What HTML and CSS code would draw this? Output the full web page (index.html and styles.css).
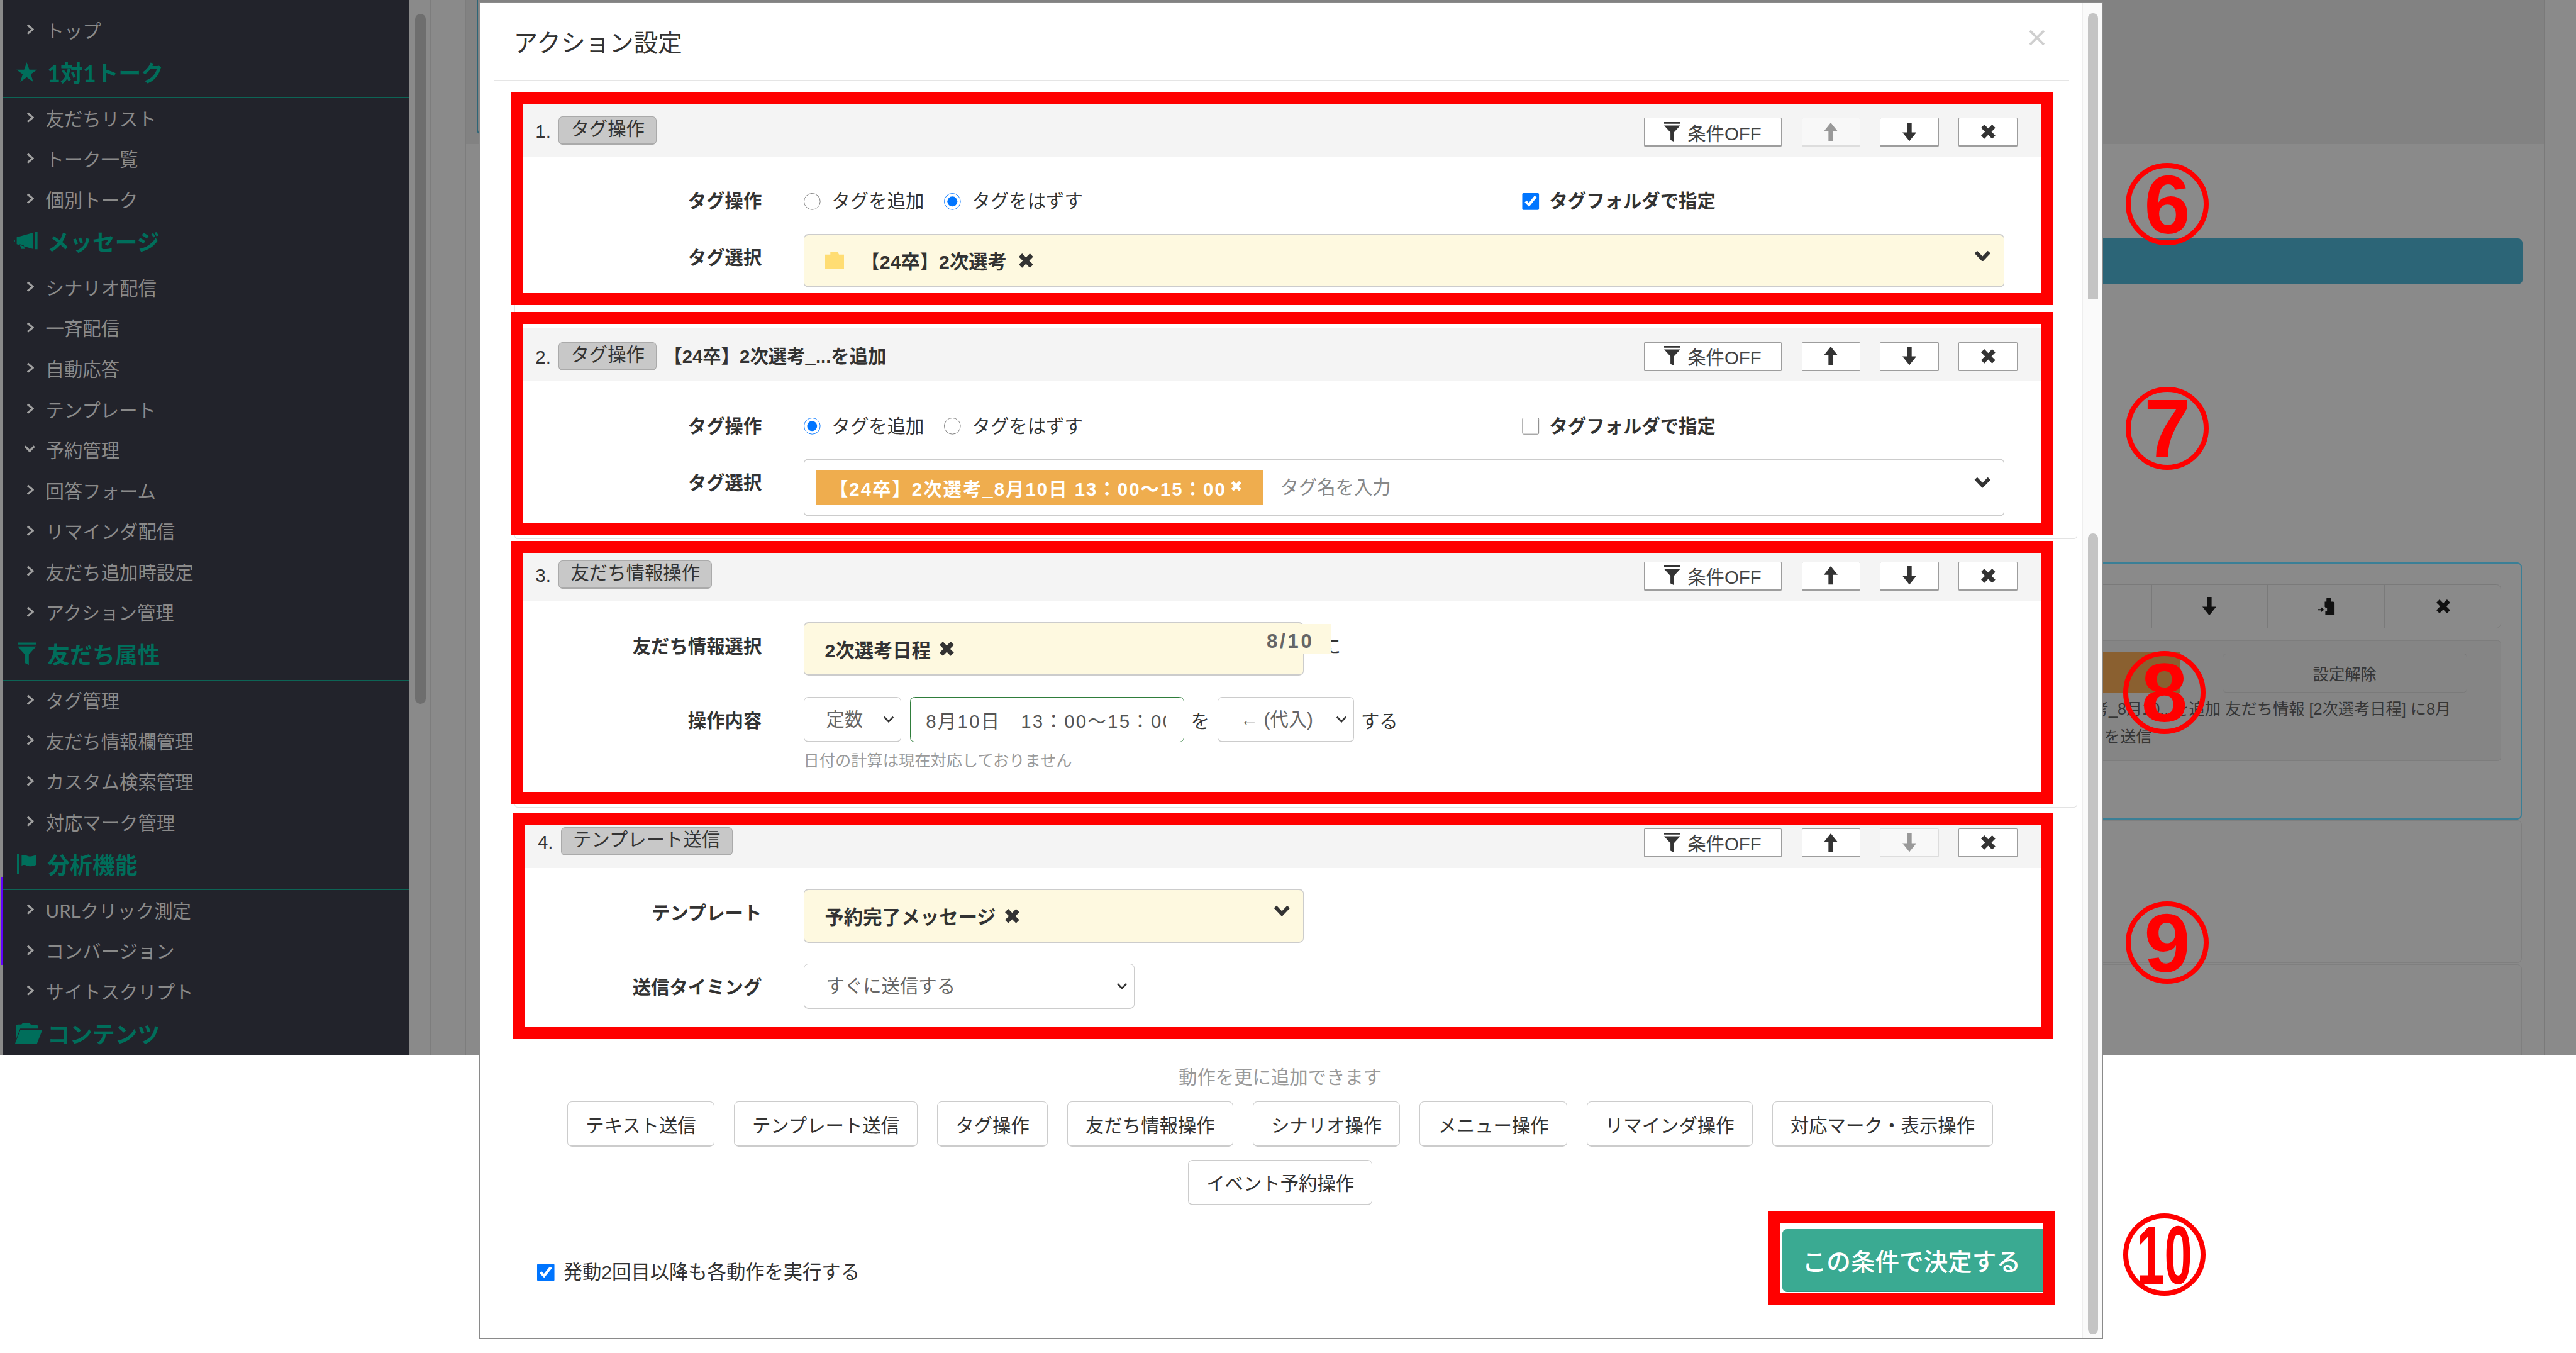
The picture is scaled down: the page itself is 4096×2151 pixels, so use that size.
FILE: index.html
```html
<!DOCTYPE html>
<html lang="ja">
  <head>
    <meta charset="UTF-8" />
    <meta name="viewport" content="width=device-width, initial-scale=1.0" />
    <title>アクション設定</title>
    <link rel="stylesheet" href="styles.css">
  </head>
  <body>
    <svg class="sprite" xmlns="http://www.w3.org/2000/svg">
      <symbol id="i-right" viewBox="0 0 13 19"><path d="M2 2l9 7.500-9 7.500" fill="none" stroke="currentColor" stroke-width="3.500"/></symbol>
      <symbol id="i-open" viewBox="0 0 20 15"><path d="M2 2.500l8 8.500 8-8.500" fill="none" stroke="currentColor" stroke-width="3.500"/></symbol>
      <symbol id="i-star" viewBox="0 0 36 34"><path d="M18 0l4.500 12.800H36l-11 8 4.200 13.200L18 26l-11.200 8L11 20.800l-11-8h13.500z" fill="currentColor"/></symbol>
      <symbol id="i-horn" viewBox="0 0 44 30"><path d="M0 13h2v4H0zM5 9L33 1v28L5 21zM10 21l3 8h6l-2-6zM37 0h4v30h-4z" fill="currentColor"/></symbol>
      <symbol id="i-flag" viewBox="0 0 34 36"><path d="M0 0h4v36H0zM8 3c6-3 10 3 16 2 4-1 8-2 10-3v17c-3 2-7 3-10 3-6 1-10-5-16-1z" fill="currentColor"/></symbol>
      <symbol id="i-folder-open" viewBox="0 0 48 36"><path d="M3 6c0-2 1-3 3-3h6l3-3h11l3 4h9c2 0 3 1 3 3v3H10L3 28zM10 13h38L39 36H1z" fill="currentColor"/></symbol>
      <symbol id="i-filter" viewBox="0 0 28 34"><path d="M0 0h28v3H0zM0 6h28L17 18v16l-6-3V18z" fill="currentColor"/></symbol>
      <symbol id="i-up" viewBox="0 0 24 32"><path d="M8 32V15H0L12 0l12 15h-8v17z" fill="currentColor"/></symbol>
      <symbol id="i-down" viewBox="0 0 24 32"><path d="M8 0v17H0l12 15 12-15h-8V0z" fill="currentColor"/></symbol>
      <symbol id="i-x" viewBox="0 0 24 24"><path d="M1 6l5-5 6 6 6-6 5 5-6 6 6 6-5 5-6-6-6 6-5-5 6-6z" fill="currentColor"/></symbol>
      <symbol id="i-chev" viewBox="0 0 29 19"><path d="M3 3l11.500 12L26 3" fill="none" stroke="currentColor" stroke-width="6.500"/></symbol>
      <symbol id="i-folder" viewBox="0 0 33 30"><path d="M9 0h13l2 4h9v26H0V4h9z" fill="currentColor"/></symbol>
      <symbol id="i-copy" viewBox="0 0 30 30"><path d="M12 7h3V2c0-1 1-2 2-2h4c1 0 2 1 2 2v5h3c2 0 3 1 3 3v20H13v-6h3v-6h-2l-2-2zM0 20h6v-3l5 4-5 4v-3H0z" fill="currentColor"/></symbol>
      <symbol id="i-close" viewBox="0 0 28 28"><path d="M2 2l24 24M26 2L2 26" fill="none" stroke="currentColor" stroke-width="4"/></symbol>
    </svg>

    <div class="page">
      <div class="screen">
        <nav class="side">
          <a class="nav-item"><svg class="nav-arrow"><use href="#i-right"/></svg>トップ</a>
          <h4 class="nav-head"><span class="nav-ico"><svg class="ico-star"><use href="#i-star"/></svg></span>1対1トーク</h4>
          <a class="nav-item"><svg class="nav-arrow"><use href="#i-right"/></svg>友だちリスト</a>
          <a class="nav-item"><svg class="nav-arrow"><use href="#i-right"/></svg>トーク一覧</a>
          <a class="nav-item"><svg class="nav-arrow"><use href="#i-right"/></svg>個別トーク</a>
          <h4 class="nav-head"><span class="nav-ico"><svg class="ico-horn"><use href="#i-horn"/></svg></span>メッセージ</h4>
          <a class="nav-item"><svg class="nav-arrow"><use href="#i-right"/></svg>シナリオ配信</a>
          <a class="nav-item"><svg class="nav-arrow"><use href="#i-right"/></svg>一斉配信</a>
          <a class="nav-item"><svg class="nav-arrow"><use href="#i-right"/></svg>自動応答</a>
          <a class="nav-item"><svg class="nav-arrow"><use href="#i-right"/></svg>テンプレート</a>
          <a class="nav-item"><svg class="nav-arrow-open"><use href="#i-open"/></svg>予約管理</a>
          <a class="nav-item"><svg class="nav-arrow"><use href="#i-right"/></svg>回答フォーム</a>
          <a class="nav-item"><svg class="nav-arrow"><use href="#i-right"/></svg>リマインダ配信</a>
          <a class="nav-item"><svg class="nav-arrow"><use href="#i-right"/></svg>友だち追加時設定</a>
          <a class="nav-item"><svg class="nav-arrow"><use href="#i-right"/></svg>アクション管理</a>
          <h4 class="nav-head"><span class="nav-ico"><svg class="ico-funnel"><use href="#i-filter"/></svg></span>友だち属性</h4>
          <a class="nav-item"><svg class="nav-arrow"><use href="#i-right"/></svg>タグ管理</a>
          <a class="nav-item"><svg class="nav-arrow"><use href="#i-right"/></svg>友だち情報欄管理</a>
          <a class="nav-item"><svg class="nav-arrow"><use href="#i-right"/></svg>カスタム検索管理</a>
          <a class="nav-item"><svg class="nav-arrow"><use href="#i-right"/></svg>対応マーク管理</a>
          <h4 class="nav-head"><span class="nav-ico"><svg class="ico-flag"><use href="#i-flag"/></svg></span>分析機能</h4>
          <a class="nav-item"><svg class="nav-arrow"><use href="#i-right"/></svg>URLクリック測定</a>
          <a class="nav-item"><svg class="nav-arrow"><use href="#i-right"/></svg>コンバージョン</a>
          <a class="nav-item"><svg class="nav-arrow"><use href="#i-right"/></svg>サイトスクリプト</a>
          <h4 class="nav-head"><span class="nav-ico"><svg class="ico-folder"><use href="#i-folder-open"/></svg></span>コンテンツ</h4>
        </nav>
        <div class="side-scroll"><div class="side-thumb"></div></div>
        <div class="rail"></div>

        <main class="main">
          <div class="band"><div class="band-card"></div></div>
          <div class="teal-bar"></div>
          <section class="card card-active">
            <div class="cell-group">
              <div class="cell"></div>
              <div class="cell"><svg class="cell-down"><use href="#i-down"/></svg></div>
              <div class="cell"><svg class="cell-copy"><use href="#i-copy"/></svg></div>
              <div class="cell"><svg class="cell-x"><use href="#i-x"/></svg></div>
            </div>
            <div class="panel">
              <div class="panel-row">
                <div class="panel-chip"></div>
                <div class="panel-btn">設定解除</div>
              </div>
              <div class="panel-line">【24卒】2次選考_8月10...を追加 友だち情報 [2次選考日程] に8月</div>
              <div class="panel-line-2">を送信</div>
            </div>
          </section>
          <section class="card card-plain"></section>
          <section class="card card-plain card-tall"></section>
        </main>
        <div class="rail-right"></div>
      </div>

      <div class="tick"></div>

      <div class="modal">
        <div class="modal-main">
          <header class="modal-head">
            <h5 class="modal-title">アクション設定</h5>
            <svg class="modal-close"><use href="#i-close"/></svg>
          </header>

          <div class="modal-body">
            <section class="act act-1">
              <div class="act-head">
                <span class="act-num">1.</span><span class="badge">タグ操作</span>
                <div class="tools">
                  <button class="tool tool-wide"><svg class="tool-filter"><use href="#i-filter"/></svg>条件OFF</button>
                  <button class="tool tool-off"><svg class="tool-arrow"><use href="#i-up"/></svg></button>
                  <button class="tool"><svg class="tool-arrow"><use href="#i-down"/></svg></button>
                  <button class="tool"><svg class="tool-x"><use href="#i-x"/></svg></button>
                </div>
              </div>
              <div class="act-body">
                <div class="row row-radio">
                  <div class="row-label">タグ操作</div>
                  <div class="opts">
                    <label class="opt"><input type="radio" name="op1">タグを追加</label>
                    <label class="opt"><input type="radio" name="op1" checked>タグをはずす</label>
                  </div>
                  <label class="opt opt-bold"><input type="checkbox" checked>タグフォルダで指定</label>
                </div>
                <div class="row">
                  <div class="row-label">タグ選択</div>
                  <div class="pick pick-full pick-cream">
                    <svg class="pick-folder"><use href="#i-folder"/></svg>
                    <span class="pick-text pick-text-folder">【24卒】2次選考</span><svg class="pick-x"><use href="#i-x"/></svg>
                    <svg class="pick-chev"><use href="#i-chev"/></svg>
                  </div>
                </div>
              </div>
            </section>
            <div class="peek"></div>

            <section class="act act-2">
              <div class="act-card">
                <div class="act-head">
                  <span class="act-num">2.</span><span class="badge">タグ操作</span><span class="act-title">【24卒】2次選考_...を追加</span>
                  <div class="tools">
                    <button class="tool tool-wide"><svg class="tool-filter"><use href="#i-filter"/></svg>条件OFF</button>
                    <button class="tool"><svg class="tool-arrow"><use href="#i-up"/></svg></button>
                    <button class="tool"><svg class="tool-arrow"><use href="#i-down"/></svg></button>
                    <button class="tool"><svg class="tool-x"><use href="#i-x"/></svg></button>
                  </div>
                </div>
                <div class="act-body">
                  <div class="row row-radio">
                    <div class="row-label">タグ操作</div>
                    <div class="opts">
                      <label class="opt"><input type="radio" name="op2" checked>タグを追加</label>
                      <label class="opt"><input type="radio" name="op2">タグをはずす</label>
                    </div>
                    <label class="opt opt-bold"><input type="checkbox">タグフォルダで指定</label>
                  </div>
                  <div class="row">
                    <div class="row-label">タグ選択</div>
                    <div class="pick pick-full pick-tall">
                      <span class="chip">【24卒】2次選考_8月10日 13：00〜15：00<svg class="chip-x"><use href="#i-x"/></svg></span>
                      <input class="pick-input" type="text" placeholder="タグ名を入力">
                      <svg class="pick-chev"><use href="#i-chev"/></svg>
                    </div>
                  </div>
                </div>
              </div>
            </section>
            <div class="peek peek-short peek-end"></div>

            <section class="act act-3">
              <div class="act-head">
                <span class="act-num">3.</span><span class="badge">友だち情報操作</span>
                <div class="tools">
                  <button class="tool tool-wide"><svg class="tool-filter"><use href="#i-filter"/></svg>条件OFF</button>
                  <button class="tool"><svg class="tool-arrow"><use href="#i-up"/></svg></button>
                  <button class="tool"><svg class="tool-arrow"><use href="#i-down"/></svg></button>
                  <button class="tool"><svg class="tool-x"><use href="#i-x"/></svg></button>
                </div>
              </div>
              <div class="act-body">
                <div class="row">
                  <div class="row-label">友だち情報選択</div>
                  <div class="pick pick-half pick-cream">
                    <span class="pick-text">2次選考日程</span><svg class="pick-x"><use href="#i-x"/></svg>
                    <span class="counter">8/10</span>
                  </div>
                  <span class="inline-word inline-ni">に</span>
                </div>
                <div class="row row-op">
                  <div class="row-label">操作内容</div>
                  <div class="op-wrap">
                    <div class="op-line">
                      <select class="sel sel-kind"><option>定数</option></select>
                      <input class="op-input" type="text" value="8月10日　13：00〜15：00">
                      <span class="inline-word">を</span>
                      <select class="sel sel-how"><option>← (代入)</option></select>
                      <span class="inline-word">する</span>
                    </div>
                    <p class="help">日付の計算は現在対応しておりません</p>
                  </div>
                </div>
              </div>
            </section>
            <div class="peek peek-long peek-end"></div>

            <section class="act act-4">
              <div class="act-head">
                <span class="act-num">4.</span><span class="badge">テンプレート送信</span>
                <div class="tools">
                  <button class="tool tool-wide"><svg class="tool-filter"><use href="#i-filter"/></svg>条件OFF</button>
                  <button class="tool"><svg class="tool-arrow"><use href="#i-up"/></svg></button>
                  <button class="tool tool-off"><svg class="tool-arrow"><use href="#i-down"/></svg></button>
                  <button class="tool"><svg class="tool-x"><use href="#i-x"/></svg></button>
                </div>
              </div>
              <div class="act-body">
                <div class="row">
                  <div class="row-label">テンプレート</div>
                  <div class="pick pick-half pick-cream">
                    <span class="pick-text">予約完了メッセージ</span><svg class="pick-x"><use href="#i-x"/></svg>
                    <svg class="pick-chev"><use href="#i-chev"/></svg>
                  </div>
                </div>
                <div class="row row-op">
                  <div class="row-label">送信タイミング</div>
                  <select class="sel sel-timing"><option>すぐに送信する</option></select>
                </div>
              </div>
            </section>

            <p class="add-title">動作を更に追加できます</p>
            <div class="add-list">
              <button class="add-btn">テキスト送信</button>
              <button class="add-btn">テンプレート送信</button>
              <button class="add-btn">タグ操作</button>
              <button class="add-btn">友だち情報操作</button>
              <button class="add-btn">シナリオ操作</button>
              <button class="add-btn">メニュー操作</button>
              <button class="add-btn">リマインダ操作</button>
              <button class="add-btn">対応マーク・表示操作</button>
              <button class="add-btn">イベント予約操作</button>
            </div>

            <div class="foot">
              <label class="opt opt-foot"><input type="checkbox" checked>発動2回目以降も各動作を実行する</label>
              <div class="submit-box"><button class="submit">この条件で決定する</button></div>
            </div>
          </div>
        </div>
        <div class="modal-track">
          <div class="thumb thumb-top"></div>
          <div class="thumb thumb-bottom"></div>
        </div>
      </div>

      <div class="mark mark-6">6</div>
      <div class="mark mark-7">7</div>
      <div class="mark mark-8">8</div>
      <div class="mark mark-9">9</div>
      <div class="mark mark-10"><span class="mark-narrow">10</span></div>
    </div>
  </body>
</html>
```

FILE: styles.css
```css
* {
  box-sizing: border-box;
}

html,
body {
  margin: 0;
  height: 100%;
  overflow: hidden;
  background-color: #fff;
}

body {
  font-family: "Liberation Sans", "Noto Sans CJK JP", sans-serif;
  font-size: 32px;
  color: #333;
}

.sprite {
  display: none;
}

/* everything below is written in reference pixels, 4096 / 4459 */
.page {
  position: relative;
  width: 4459px;
  height: 2342px;
  overflow: hidden;
  zoom: 0.91859;
}

.screen {
  display: flex;
  height: 1826px;
  overflow: hidden;
  background-color: #8a8a8a;
}

/* sidebar */
.side {
  flex: none;
  width: 705px;
  margin-left: 4px;
  padding-top: 18px;
  overflow: hidden;
  background-color: #22232b;
  font-family: Lato, "Noto Sans CJK JP", sans-serif;
}

.nav-item {
  display: flex;
  align-items: center;
  height: 70.3px;
  padding: 0 0 4px 42px;
  color: #8a8a8a;
  font-size: 32px;
}

.nav-arrow {
  flex: none;
  width: 13px;
  height: 19px;
  margin-right: 20px;
  color: #a0a0a0;
}

.nav-arrow-open {
  flex: none;
  width: 20px;
  height: 15px;
  margin: 0 18px 0 -5px;
  color: #a0a0a0;
}

.nav-head {
  display: flex;
  align-items: center;
  height: 82px;
  margin: 0;
  padding: 0 0 9px 20px;
  border-bottom: 2px solid #0d6455;
  color: #006e5b;
  font-size: 39px;
  font-weight: 700;
}

.nav-ico {
  display: flex;
  flex: none;
  justify-content: center;
  width: 44px;
  margin-right: 14px;
}

.ico-star {
  width: 36px;
  height: 34px;
}

.ico-horn {
  width: 44px;
  height: 30px;
}

.ico-funnel {
  width: 32px;
  height: 40px;
}

.ico-flag {
  width: 34px;
  height: 36px;
}

.ico-folder {
  flex: none;
  width: 48px;
  height: 36px;
  margin-left: 6px;
}

.side-scroll {
  flex: none;
  width: 37px;
  padding: 24px 0 0 9px;
  border-right: 2px solid #7d7d7d;
}

.side-thumb {
  width: 19px;
  height: 1194px;
  border-radius: 10px;
  background-color: #6e6e6e;
}

.rail {
  flex: none;
  width: 61px;
  border-right: 2px solid #7d7d7d;
}

/* page behind the modal, dimmed */
.main {
  flex: 1;
  min-width: 0;
  border-right: 2px solid #7a7a7a;
}

.rail-right {
  flex: none;
  width: 54px;
}

.band {
  height: 249px;
  padding-left: 18px;
  background-color: #828282;
}

.band-card {
  width: 60px;
  height: 233px;
  border-left: 3px solid #2c6577;
  border-bottom: 3px solid #2c6577;
  border-radius: 0 0 0 8px;
}

.teal-bar {
  height: 79px;
  margin: 164px 37px 0 200px;
  border-radius: 0 8px 8px 0;
  background-color: #2c6577;
}

.card {
  width: 1166px;
  margin: 2px 38px 0 auto;
  border-radius: 8px;
}

.card-active {
  height: 445px;
  margin-top: 481px;
  padding: 36px 34px 0;
  border: 3px solid #3a7f96;
}

.card-plain {
  height: 247px;
  border: 2px solid #7f7f7f;
}

.card-tall {
  height: 300px;
}

.cell-group {
  display: flex;
  width: 808px;
  height: 76px;
  margin-left: auto;
}

.cell {
  display: flex;
  flex: 1;
  align-items: center;
  justify-content: center;
  border: 2px solid #7a7a7a;
  border-left-width: 1px;
  border-right-width: 1px;
  color: #111;
}

.cell:last-child {
  border-radius: 0 8px 8px 0;
}

.cell-down {
  width: 26px;
  height: 32px;
}

.cell-copy {
  width: 31px;
  height: 30px;
}

.cell-x {
  width: 26px;
  height: 26px;
}

.panel {
  height: 209px;
  margin-top: 21px;
  padding-top: 20px;
  overflow: hidden;
  border: 2px solid #7d7d7d;
  border-radius: 6px;
  background-color: #858585;
  color: #363636;
  font-size: 27.500px;
}

.panel-row {
  display: flex;
  justify-content: flex-end;
  padding-right: 58px;
}

.panel-chip {
  width: 300px;
  height: 71px;
  margin-right: 72px;
  background-color: #8a6030;
}

.panel-btn {
  display: flex;
  align-items: center;
  justify-content: center;
  width: 424px;
  height: 67px;
  margin-top: 2px;
  border: 2px solid #7a7a7a;
  border-radius: 6px;
}

.panel-line {
  padding: 3px 86px 0 0;
  line-height: 48px;
  text-align: right;
  white-space: nowrap;
}

.panel-line-2 {
  margin-left: 405px;
  line-height: 48px;
}

.tick {
  position: absolute;
  left: 2px;
  top: 1518px;
  width: 2px;
  height: 152px;
  background-color: #6200ff;
}

/* modal */
.modal {
  position: absolute;
  left: 830px;
  top: 3px;
  display: flex;
  width: 2810px;
  height: 2314px;
  border: 2px solid #8a8a8a;
  background-color: #fff;
}

.modal-main {
  flex: 1;
  min-width: 0;
}

.modal-head {
  display: flex;
  align-items: center;
  justify-content: space-between;
  height: 135px;
  margin: 0 23px;
  padding: 0 42px 0 35px;
  border-bottom: 2px solid #e5e5e5;
}

.modal-title {
  margin: 0;
  font-size: 42px;
  font-weight: 400;
}

.modal-close {
  width: 28px;
  height: 28px;
  margin-top: -12px;
  color: #cfcfcf;
}

.modal-body {
  padding: 21px 0 0 53px;
}

.modal-track {
  position: relative;
  flex: none;
  width: 34px;
  border-left: 2px solid #eee;
  background-color: #fafafa;
}

.thumb {
  position: absolute;
  left: 8px;
  width: 18px;
  background-color: #c4c4c4;
}

.thumb-top {
  top: 19px;
  height: 495px;
  border-radius: 9px 9px 0 0;
}

.thumb-bottom {
  top: 919px;
  height: 1386px;
  border-radius: 9px;
}

/* the numbered actions, red frames drawn on the screenshot */
.act {
  width: 2669px;
  border: 21px solid #f00;
}

.act-1 {
  height: 368px;
}

.act-2 {
  height: 386px;
}

.act-3 {
  height: 455px;
}

.act-4 {
  width: 2665px;
  height: 392px;
  margin-left: 4px;
}

.act-card {
  margin-top: 6px;
  border-top: 2px solid #e2e2e2;
}

.peek {
  height: 12px;
  margin: 0 9px 0 6px;
  border-left: 2px solid #e3e3e3;
  border-right: 2px solid #e3e3e3;
}

.peek-short {
  height: 10px;
}

.peek-long {
  height: 15px;
}

.peek-end {
  border-bottom: 2px solid #e3e3e3;
  border-radius: 0 0 6px 6px;
}

.peek-end.peek-short {
  height: 7px;
  margin-bottom: 3px;
}

.peek-end.peek-long {
  height: 7px;
  margin-bottom: 8px;
}

.act-head {
  display: flex;
  align-items: flex-start;
  padding-left: 22px;
  background-color: #f4f4f4;
}

.act-1 .act-head {
  height: 90px;
  padding-top: 21px;
}

.act-2 .act-head {
  height: 92px;
  padding-top: 24px;
}

.act-3 .act-head {
  height: 84px;
  padding-top: 13px;
}

.act-4 .act-head {
  height: 76px;
  padding-top: 5px;
}

.act-num {
  width: 40px;
  line-height: 52px;
}

.badge {
  height: 49px;
  padding: 0 20px;
  border: 2px solid #aaa;
  border-bottom-width: 3px;
  border-radius: 7px;
  background-color: #c8c8c8;
  line-height: 42px;
  white-space: nowrap;
}

.act-title {
  margin-left: 12px;
  font-weight: 700;
  line-height: 50px;
}

.tools {
  display: flex;
  gap: 34px;
  margin-left: auto;
  padding-right: 40px;
}

.act-1 .tools {
  margin-top: 2px;
}

.act-2 .tools {
  margin-top: 0;
}

.act-3 .tools {
  margin-top: 2px;
}

.act-4 .tools {
  margin-top: 2px;
}

.tool {
  display: flex;
  align-items: center;
  justify-content: center;
  width: 102px;
  height: 50px;
  padding: 0;
  border: 2px solid #9d9d9d;
  border-bottom-width: 3px;
  border-radius: 2px;
  background-color: #fff;
  color: #333;
  font: inherit;
}

.tool-wide {
  width: 239px;
  color: #444;
}

.tool-off {
  border-color: #ddd;
  background-color: #f8f8f8;
  color: #999;
}

.tool-filter {
  width: 28px;
  height: 34px;
  margin-right: 12px;
  color: #333;
}

.tool-arrow {
  width: 24px;
  height: 32px;
}

.tool-x {
  width: 27px;
  height: 27px;
}

.act-body {
  padding-top: 36px;
}

.row {
  display: flex;
  align-items: flex-start;
}

.row-radio {
  height: 98px;
}

.row-op {
  margin-top: 36px;
}

.row-label {
  flex: none;
  width: 414px;
  margin-right: 72px;
  padding-top: 18px;
  font-weight: 700;
  line-height: 48px;
  text-align: right;
}

.act-4 .row-label {
  width: 410px;
}

.opts {
  display: flex;
  flex: none;
  gap: 34px;
  width: 1244px;
}

.opt {
  display: flex;
  align-items: center;
  gap: 19px;
  padding-top: 18px;
  line-height: 48px;
}

.opt input {
  width: 30px;
  height: 30px;
  margin: 0;
}

.opt-bold {
  gap: 17px;
  font-weight: 700;
}

.opt-foot {
  gap: 15px;
  margin: 50px 0 0 46px;
  padding-top: 0;
  font-size: 33px;
}

.pick {
  display: flex;
  position: relative;
  align-items: center;
  padding-left: 36px;
  border: 2px solid #ccc;
  border-top-width: 3px;
  border-bottom-width: 3px;
  border-radius: 8px;
  background-color: #fff;
}

.pick-full {
  width: 2079px;
  height: 93px;
}

.pick-half {
  width: 866px;
  height: 93px;
}

.pick-tall {
  height: 100px;
  padding-left: 20px;
}

.pick-cream {
  background-color: #fef9e0;
}

.pick-folder {
  flex: none;
  width: 33px;
  height: 30px;
  color: #ffdd73;
}

.pick-text {
  font-size: 33px;
  font-weight: 700;
}

.pick-text-folder {
  margin: 0 6px 0 29px;
}

.pick-x {
  flex: none;
  width: 27px;
  height: 27px;
  margin-left: 14px;
}

.pick-chev {
  flex: none;
  width: 29px;
  height: 19px;
  margin: -18px 0 0 auto;
  margin-right: 22px;
}

.pick-input {
  flex: 1;
  min-width: 0;
  margin-left: 30px;
  padding: 0;
  border: 0;
  outline: 0;
  background: transparent;
  font: inherit;
}

.pick-input::placeholder {
  color: #888;
}

.chip {
  display: flex;
  flex: none;
  align-items: center;
  width: 774px;
  height: 60px;
  padding: 0 0 0 24px;
  background-color: #efad4e;
  color: #fff;
  font-weight: 700;
  letter-spacing: 2.200px;
  white-space: nowrap;
}

.chip-x {
  width: 19px;
  height: 19px;
  margin: -6px 0 0 8px;
}

.counter {
  position: absolute;
  z-index: 1;
  right: -48px;
  top: 1px;
  height: 52px;
  padding: 0 29px 0 14px;
  background-color: #fef9e0;
  color: #666;
  font-size: 34px;
  font-weight: 700;
  letter-spacing: 4px;
  line-height: 60px;
}

.inline-word {
  flex: none;
  margin-left: 12px;
}

.inline-ni {
  margin: 16px 0 0 32px;
}

.op-wrap {
  flex: none;
}

.op-line {
  display: flex;
  align-items: center;
}

.sel {
  height: 79px;
  padding: 0 0 0 38px;
  border: 2px solid #ccc;
  border-bottom-width: 3px;
  border-radius: 8px;
  background: #fff url("data:image/svg+xml,%3Csvg xmlns='http://www.w3.org/2000/svg' viewBox='0 0 20 12'%3E%3Cpath d='M2 2l8 8 8-8' fill='none' stroke='%23333' stroke-width='3'/%3E%3C/svg%3E") no-repeat right 10px center / 20px 12px;
  color: #666;
  font: inherit;
  appearance: none;
}

.sel-kind {
  width: 169px;
}

.sel-how {
  width: 236px;
  margin-left: 14px;
}

.sel-timing {
  width: 573px;
}

.op-input {
  width: 475px;
  height: 79px;
  margin-left: 15px;
  padding: 0 30px 0 27px;
  border: 2px solid #2f7d3b;
  border-radius: 8px;
  outline: 0;
  color: #555;
  font: inherit;
  letter-spacing: 2.500px;
}

.help {
  margin: 14px 0 0;
  color: #999;
  font-size: 27.500px;
  line-height: 36px;
}

/* buttons under the actions */
.add-title {
  margin: 43px 0 0;
  width: 2664px;
  color: #999;
  line-height: 48px;
  text-align: center;
}

.add-list {
  display: flex;
  flex-wrap: wrap;
  gap: 22px 34px;
  justify-content: center;
  width: 2520px;
  margin: 17px 0 0 72px;
}

.add-btn {
  height: 79px;
  padding: 0 30.500px;
  border: 2px solid #ccc;
  border-bottom-width: 3px;
  border-radius: 8px;
  background-color: #fff;
  color: #333;
  font: inherit;
}

.foot {
  display: flex;
  align-items: center;
  justify-content: space-between;
  width: 2674px;
  margin-top: 11px;
}

.submit-box {
  width: 498px;
  height: 161px;
  padding: 10px 0 0 4px;
  overflow: hidden;
  border: 21px solid #f00;
  background-color: #fff;
}

.submit {
  display: block;
  width: 470px;
  height: 108px;
  padding: 0 22px 0 0;
  border: 0;
  border-bottom: 2px solid #2f9480;
  border-radius: 8px;
  background-color: #3aaa92;
  color: #fff;
  font: inherit;
  font-size: 42px;
  font-weight: 500;
  text-align: center;
}

/* circled numbers on the screenshot */
.mark {
  position: absolute;
  display: flex;
  align-items: center;
  justify-content: center;
  width: 143px;
  height: 143px;
  border: 9px solid #f00;
  border-radius: 50%;
  color: #f00;
  font-family: "Liberation Sans", sans-serif;
  font-size: 144px;
  font-weight: 700;
  line-height: 1;
}

.mark-6 {
  left: 3680px;
  top: 282px;
}

.mark-7 {
  left: 3680px;
  top: 670px;
}

.mark-8 {
  left: 3675px;
  top: 1127px;
}

.mark-9 {
  left: 3680px;
  top: 1560px;
}

.mark-10 {
  left: 3675px;
  top: 2100px;
}

.mark-narrow {
  display: block;
  transform: scaleX(0.6);
}
```
